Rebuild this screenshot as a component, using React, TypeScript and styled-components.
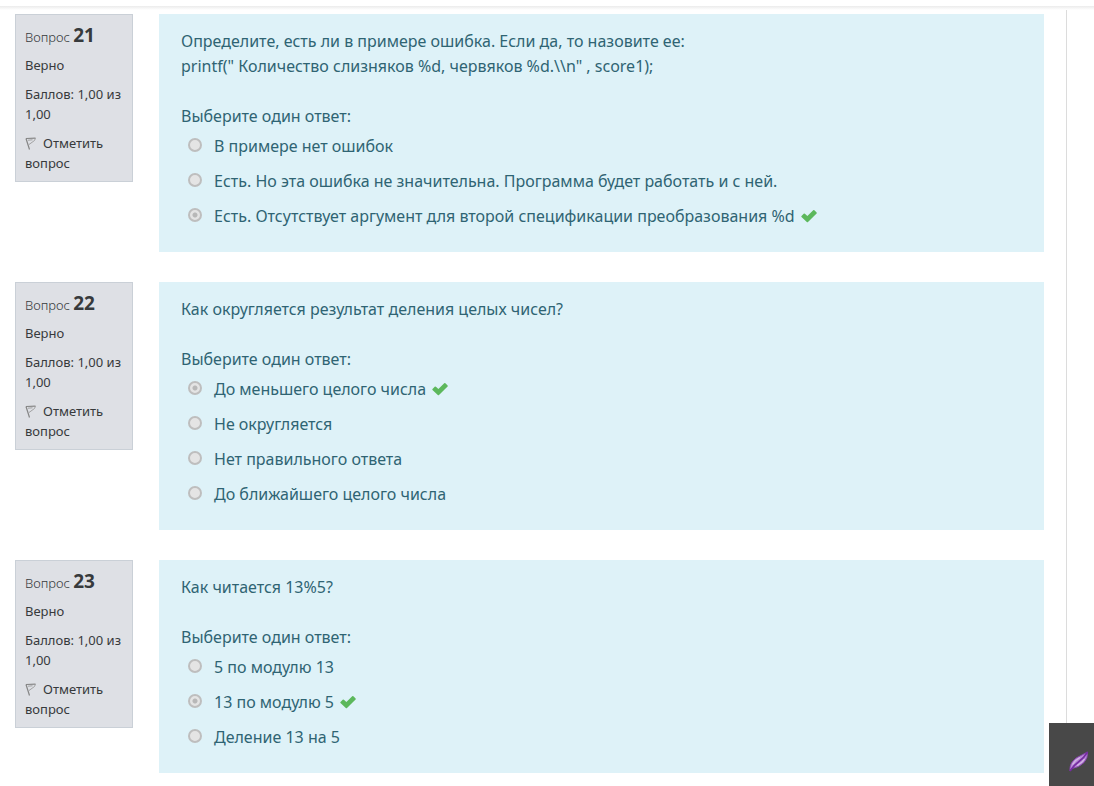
import React from 'react';
import styled, { createGlobalStyle } from 'styled-components';

const GlobalStyle = createGlobalStyle`
  *, *::before, *::after { box-sizing: border-box; }
  body {
    margin: 0;
    background: #fff;
    font-family: "Segoe UI", "Noto Sans", "Open Sans", sans-serif;
    font-size: 16px;
    line-height: 25px;
    color: #373a3c;
  }
`;

const Page = styled.div`
  display: flex;
  flex-direction: column;
  min-height: 100vh;
  padding-top: 6px;
`;

const HeaderShadow = styled.div`
  height: 4px;
  background: linear-gradient(#ebebeb, #fff);
`;

const Main = styled.main`
  flex: 1;
  display: flex;
  flex-direction: column;
  gap: 30px;
  margin-right: 27px;
  padding: 4px 22px 13px 15px;
  border-right: 1px solid #dcdcdc;
`;

const QuestionRow = styled.section`
  display: flex;
  align-items: flex-start;
  gap: 26px;
`;

const Info = styled.aside`
  flex: 0 0 118px;
  display: flex;
  flex-direction: column;
  gap: 9px;
  padding: 11px 9px 8px;
  border: 1px solid #cad0d7;
  background: #dee0e5;
  font-size: 13px;
  line-height: 20px;
`;

const Title = styled.h3`
  margin: 0;
  font-size: 13px;
  font-weight: 300;
  line-height: 18px;
  white-space: nowrap;
`;

const Number = styled.span`
  font-size: 19px;
  font-weight: 700;
`;

const InfoText = styled.div``;

const FlagLink = styled.a`
  color: inherit;
  text-decoration: none;
`;

const FlagSvg = styled.svg`
  width: 12px;
  height: 13px;
  margin-right: 6px;
  vertical-align: -2px;
`;

const Content = styled.div`
  flex: 1;
  min-width: 0;
  padding: 15px 22px 18px;
  background: #def2f8;
  color: #2f6473;
`;

const QuestionText = styled.p`
  margin: 0 0 25px;
  white-space: pre-line;
`;

const Answers = styled.fieldset`
  margin: 0;
  padding: 0;
  border: 0;
`;

const Prompt = styled.legend`
  padding: 0;
`;

const Answer = styled.label`
  display: flex;
  align-items: center;
  min-height: 35px;
  padding-left: 7px;
`;

const Radio = styled.input`
  appearance: none;
  flex: none;
  width: 14px;
  height: 14px;
  margin: 0 12px 4px 0;
  border: 2px solid #bebebe;
  border-radius: 50%;
  background: #e4e4e4;

  &:checked {
    background: radial-gradient(circle, #b8b8b8 0 2px, #e4e4e4 3px);
  }
`;

const CheckSvg = styled.svg`
  flex: none;
  width: 16px;
  height: 14px;
  margin: 0 0 2px 6px;
`;

const HelperButton = styled.button`
  position: fixed;
  right: 0;
  bottom: 0;
  display: flex;
  align-items: flex-end;
  justify-content: center;
  width: 45px;
  height: 63px;
  padding: 0 0 14px 14px;
  border: 0;
  background: #484848;
`;

const Flag = () => (
  <FlagSvg viewBox="0 0 12 13" fill="none" stroke="#858585" aria-hidden="true">
    <path d="M1 1.500 4.500 12.500M1 1.500 10.500 1.200" strokeWidth="1.200" />
    <path d="M10.500 1.200 9.500 3.500 4 7.500M3 3.200 7.500 2.800" stroke="#9a9a9a" strokeWidth="0.900" />
  </FlagSvg>
);

const Check = () => (
  <CheckSvg viewBox="0 0 16 14" role="img" aria-label="Верно">
    <path
      d="M.5 7 2.700 4.700Q3.300 4.200 3.900 4.700L6.400 7.100 12.200 1.200Q12.800.7 13.400 1.200L15.600 3.400Q16.100 4 15.600 4.600L7 13Q6.400 13.500 5.800 13L.5 8Q.1 7.500.5 7Z"
      fill="#5cb85c"
    />
  </CheckSvg>
);

const Feather = () => (
  <svg width="20" height="21" viewBox="0 0 20 21" aria-hidden="true">
    <path d="M1 20C.5 14 3 10 8 6.500Q13 4 18.500 1 19 7 15 11.500 10 16.500 3 17.500Z" fill="#b98ad6" stroke="#8742ad" strokeWidth="0.9" />
    <path d="M3.500 13.500Q6 9 11 6.500M8 14.500Q13 12 15.500 8" fill="none" stroke="#d5b9e5" strokeWidth="1.200" />
    <path d="M1 20Q5 14 10 10.500T18.500 1" fill="none" stroke="#762ca1" strokeWidth="1.700" />
  </svg>
);

interface Question {
  number: number;
  text: string;
  options: string[];
  selected: number;
}

const questions: Question[] = [
  {
    number: 21,
    text: 'Определите, есть ли в примере ошибка. Если да, то назовите ее:\nprintf(" Количество слизняков %d, червяков %d.\\\\n" , score1);',
    options: [
      'В примере нет ошибок',
      'Есть. Но эта ошибка не значительна. Программа будет работать и с ней.',
      'Есть. Отсутствует аргумент для второй спецификации преобразования %d',
    ],
    selected: 2,
  },
  {
    number: 22,
    text: 'Как округляется результат деления целых чисел?',
    options: [
      'До меньшего целого числа',
      'Не округляется',
      'Нет правильного ответа',
      'До ближайшего целого числа',
    ],
    selected: 0,
  },
  {
    number: 23,
    text: 'Как читается 13%5?',
    options: ['5 по модулю 13', '13 по модулю 5', 'Деление 13 на 5'],
    selected: 1,
  },
];

const QuestionItem = ({ number, text, options, selected }: Question) => (
  <QuestionRow>
    <Info>
      <Title>
        Вопрос <Number>{number}</Number>
      </Title>
      <InfoText>Верно</InfoText>
      <InfoText>Баллов: 1,00 из 1,00</InfoText>
      <FlagLink href="#flag">
        <Flag />
        Отметить вопрос
      </FlagLink>
    </Info>
    <Content>
      <QuestionText>{text}</QuestionText>
      <Answers>
        <Prompt>Выберите один ответ:</Prompt>
        {options.map((option, i) => (
          <Answer key={option}>
            <Radio type="radio" name={`q${number}`} disabled defaultChecked={i === selected} />
            {option}
            {i === selected && <Check />}
          </Answer>
        ))}
      </Answers>
    </Content>
  </QuestionRow>
);

export default function App() {
  return (
    <Page>
      <GlobalStyle />
      <HeaderShadow />
      <Main>
        {questions.map((q) => (
          <QuestionItem key={q.number} {...q} />
        ))}
      </Main>
      <HelperButton type="button" aria-label="Перо">
        <Feather />
      </HelperButton>
    </Page>
  );
}
